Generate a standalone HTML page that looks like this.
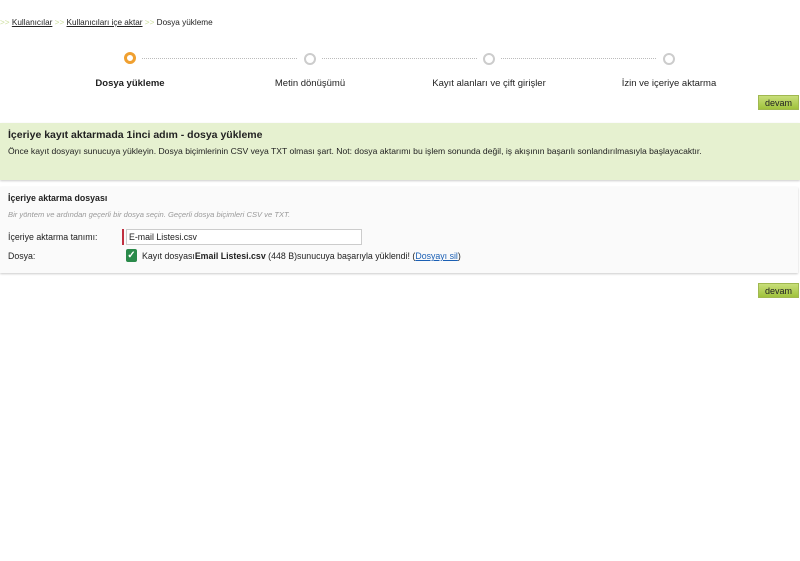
<!DOCTYPE html><html><head><meta charset="utf-8"><style>
body{margin:0;width:800px;height:561px;background:#fff;font-family:"Liberation Sans",sans-serif;font-size:8.8px;color:#222;position:relative;overflow:hidden}
.a{position:absolute;white-space:nowrap}
.bc a{color:#222;text-decoration:underline}
.sep{color:#cfe0a0}
.c{position:absolute;width:8px;height:8px;border-radius:50%;border:2px solid #ccc;background:#fff}
.c.on{border:3px solid #f0a030;width:6px;height:6px}
.line{position:absolute;top:58px;height:0;border-top:1px dotted #bbb}
.lbl{position:absolute;top:78px;width:160px;text-align:center;font-size:9.5px}
.btn{position:absolute;left:758px;width:41px;height:15px;background:linear-gradient(#c8de7a,#9fc23c);border:1px solid #a0b850;box-sizing:border-box;font-size:9px;text-align:center;line-height:14px;color:#222}
</style></head><body>
<div class="a bc" style="left:0;top:18px;font-size:8.2px"><span class="sep">&gt;&gt;</span> <a>Kullanıcılar</a> <span class="sep">&gt;&gt;</span> <a>Kullanıcıları içe aktar</a> <span class="sep">&gt;&gt;</span> Dosya yükleme</div>
<div class="c on" style="left:124px;top:52px"></div>
<div class="c" style="left:304px;top:53px"></div>
<div class="c" style="left:483px;top:53px"></div>
<div class="c" style="left:663px;top:53px"></div>
<div class="line" style="left:142px;width:155px"></div>
<div class="line" style="left:322px;width:155px"></div>
<div class="line" style="left:501px;width:155px"></div>
<div class="lbl" style="left:50px;font-weight:bold">Dosya yükleme</div>
<div class="lbl" style="left:230px">Metin dönüşümü</div>
<div class="lbl" style="left:409px">Kayıt alanları ve çift girişler</div>
<div class="lbl" style="left:589px">İzin ve içeriye aktarma</div>
<div class="btn" style="top:95px">devam</div>
<div class="a" style="left:0;top:123px;width:800px;height:57px;background:#e6f1d0;box-shadow:0 1px 2px #ccc"></div>
<div class="a" style="left:8px;top:129px;font-size:10.5px;font-weight:bold">İçeriye kayıt aktarmada 1inci adım - dosya yükleme</div>
<div class="a" style="left:8px;top:146px;font-size:8.6px">Önce kayıt dosyayı sunucuya yükleyin. Dosya biçimlerinin CSV veya TXT olması şart. Not: dosya aktarımı bu işlem sonunda değil, iş akışının başarılı sonlandırılmasıyla başlayacaktır.</div>
<div class="a" style="left:0;top:187px;width:798px;height:86px;background:#fafafa;box-shadow:0 1px 2px #ccc"></div>
<div class="a" style="left:8px;top:193px;font-weight:bold">İçeriye aktarma dosyası</div>
<div class="a" style="left:8px;top:210px;font-style:italic;color:#999;font-size:7.6px">Bir yöntem ve ardından geçerli bir dosya seçin. Geçerli dosya biçimleri CSV ve TXT.</div>
<div class="a" style="left:8px;top:232px">İçeriye aktarma tanımı:</div>
<div class="a" style="left:122px;top:229px;width:2px;height:16px;background:#c03040"></div>
<div class="a" style="left:126px;top:229px;width:236px;height:16px;border:1px solid #ccc;background:#fff;box-sizing:border-box;padding:2px 2px;line-height:11px">E-mail Listesi.csv</div>
<div class="a" style="left:8px;top:251px">Dosya:</div>
<div class="a" style="left:126px;top:249px;width:11px;height:13px;background:#2a8a4a;border-radius:2px;color:#fff;font-size:10px;text-align:center;line-height:13px;font-weight:bold">✓</div>
<div class="a" style="left:142px;top:251px">Kayıt dosyası<b>Email Listesi.csv</b> (448 B)sunucuya başarıyla yüklendi! (<span style="color:#1a5fb4;text-decoration:underline">Dosyayı sil</span>)</div>
<div class="btn" style="top:283px">devam</div>
</body></html>
